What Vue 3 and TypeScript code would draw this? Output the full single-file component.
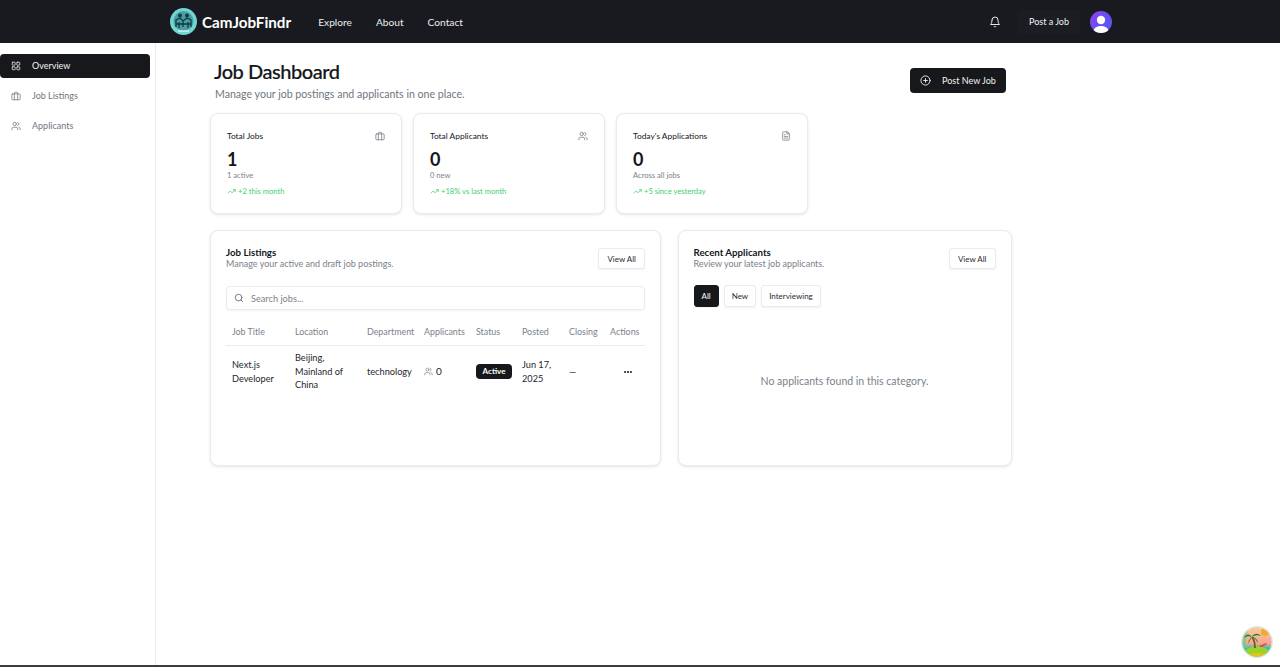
<template>
  <div class="app">
    <header class="navbar">
      <div class="brand">
        <svg class="logo" viewBox="0 0 27 27">
          <circle cx="13.5" cy="13.5" r="13.5" fill="#6fd6d2" />
          <circle cx="13.5" cy="13" r="10" fill="#4a9ea1" />
          <circle cx="10" cy="7.5" r="2" fill="#123c44" />
          <circle cx="17" cy="7.5" r="2" fill="#123c44" />
          <path d="M6 19v-7l4-2 3 3 4-3 4 2v7M13 13v6M9 14v6M18 14v6M6 16h15" fill="none" stroke="#0f3a42" stroke-width="1.3" />
          <path d="M8 23h11" stroke="#d8f4f2" stroke-width="1.4" />
        </svg>
        <span class="brand-name">CamJobFindr</span>
      </div>
      <nav class="nav-links">
        <a>Explore</a>
        <a>About</a>
        <a>Contact</a>
      </nav>
      <div class="nav-right">
        <svg class="bell" viewBox="0 0 24 24">
          <path d="M6 8a6 6 0 0 1 12 0c0 7 3 9 3 9H3s3-2 3-9" />
          <path d="M10.3 21a1.94 1.94 0 0 0 3.4 0" />
        </svg>
        <button class="post-job">Post a Job</button>
        <svg class="avatar" viewBox="0 0 22 22">
          <defs>
            <linearGradient id="av" x1="0" y1="0" x2="1" y2="1">
              <stop offset="0" stop-color="#8b3ff0" />
              <stop offset="1" stop-color="#4f5df0" />
            </linearGradient>
            <clipPath id="avc"><circle cx="11" cy="11" r="11" /></clipPath>
          </defs>
          <circle cx="11" cy="11" r="11" fill="url(#av)" />
          <g clip-path="url(#avc)" fill="#fff">
            <circle cx="11" cy="9" r="4.2" />
            <ellipse cx="11" cy="20" rx="7.5" ry="5" />
          </g>
        </svg>
      </div>
    </header>

    <div class="body">
      <aside class="sidebar">
        <a v-for="item in sideItems" :key="item.label" class="side-item" :class="{ active: item.active }">
          <svg class="icon" viewBox="0 0 24 24" v-html="icons[item.icon]"></svg>
          <span>{{ item.label }}</span>
        </a>
      </aside>

      <main class="main">
        <div class="page-head">
          <div>
            <h1>Job Dashboard</h1>
            <p>Manage your job postings and applicants in one place.</p>
          </div>
          <button class="post-new">
            <svg viewBox="0 0 24 24">
              <circle cx="12" cy="12" r="10" />
              <path d="M8 12h8M12 8v8" />
            </svg>
            Post New Job
          </button>
        </div>

        <section class="stats">
          <div v-for="s in stats" :key="s.title" class="stat">
            <div class="stat-top">
              <span>{{ s.title }}</span>
              <svg class="icon" viewBox="0 0 24 24" v-html="icons[s.icon]"></svg>
            </div>
            <div class="stat-value">{{ s.value }}</div>
            <div class="stat-sub">{{ s.sub }}</div>
            <div class="stat-trend">
              <svg viewBox="0 0 24 24">
                <path d="M22 7l-8.5 8.5-5-5L2 17" />
                <path d="M16 7h6v6" />
              </svg>
              {{ s.trend }}
            </div>
          </div>
        </section>

        <section class="panels">
          <div class="panel listings">
            <div class="panel-head">
              <div>
                <h2>Job Listings</h2>
                <p>Manage your active and draft job postings.</p>
              </div>
              <button class="outline">View All</button>
            </div>
            <div class="search">
              <svg viewBox="0 0 24 24">
                <circle cx="11" cy="11" r="8" />
                <path d="M21 21l-4.3-4.3" />
              </svg>
              <span>Search jobs...</span>
            </div>
            <table>
              <colgroup>
                <col v-for="c in columns" :key="c.name" :class="c.cls" />
              </colgroup>
              <thead>
                <tr>
                  <th v-for="c in columns" :key="c.name">{{ c.name }}</th>
                </tr>
              </thead>
              <tbody>
                <tr>
                  <td>Next.js Developer</td>
                  <td>Beijing, Mainland of China</td>
                  <td>technology</td>
                  <td>
                    <span class="count">
                      <svg class="icon" viewBox="0 0 24 24" v-html="icons.users"></svg>
                      0
                    </span>
                  </td>
                  <td><span class="badge">Active</span></td>
                  <td>Jun 17, 2025</td>
                  <td>—</td>
                  <td class="dots">
                    <svg viewBox="0 0 24 24">
                      <circle cx="5" cy="12" r="2.6" />
                      <circle cx="12" cy="12" r="2.6" />
                      <circle cx="19" cy="12" r="2.6" />
                    </svg>
                  </td>
                </tr>
              </tbody>
            </table>
          </div>

          <div class="panel recent">
            <div class="panel-head">
              <div>
                <h2>Recent Applicants</h2>
                <p>Review your latest job applicants.</p>
              </div>
              <button class="outline">View All</button>
            </div>
            <div class="filters">
              <button class="outline filter on">All</button>
              <button class="outline filter">New</button>
              <button class="outline filter">Interviewing</button>
            </div>
            <div class="empty">No applicants found in this category.</div>
          </div>
        </section>
      </main>
    </div>
    <div class="bottom-line"></div>

    <svg class="float-badge" viewBox="0 0 32 32">
      <defs>
        <linearGradient id="sky" x1="0" y1="0" x2="0" y2="1">
          <stop offset="0" stop-color="#f9cf9c" />
          <stop offset="0.55" stop-color="#f5a78c" />
          <stop offset="0.7" stop-color="#35bfae" />
        </linearGradient>
        <clipPath id="fb"><circle cx="16" cy="16" r="14.5" /></clipPath>
      </defs>
      <circle cx="16" cy="16" r="16" fill="#dfe6df" />
      <g clip-path="url(#fb)">
        <rect width="32" height="32" fill="url(#sky)" />
        <path d="M0 0h10C5 6 4 14 6 22H0z" fill="#66cf8e" opacity=".75" />
        <circle cx="24" cy="6" r="4" fill="#f6a92e" />
        <path d="M18 20l7-3 1 1-6 4z" fill="#e8455c" />
        <ellipse cx="16" cy="29" rx="14" ry="8.5" fill="#9ad42a" />
        <ellipse cx="16" cy="33" rx="15" ry="6" fill="#e2c51c" />
        <path d="M14 22c0-4-.5-8-3-11" stroke="#7a4f24" stroke-width="1.8" fill="none" />
        <path d="M11 11C8 7 5 8 3 12c3-2 5-2 8-1zM11 11c2-4 6-4 9-1-3-1-6-1-9 1zM11 11c-2 1-4 4-4 7 1-3 3-5 4-7zM11 11c3 0 6 3 6 6-2-3-3-5-6-6z" fill="#14803a" />
      </g>
    </svg>
  </div>
</template>

<script setup lang="ts">
const icons: Record<string, string> = {
  grid: '<rect x="3" y="3" width="7" height="7" rx="1"/><rect x="14" y="3" width="7" height="7" rx="1"/><rect x="14" y="14" width="7" height="7" rx="1"/><rect x="3" y="14" width="7" height="7" rx="1"/>',
  briefcase: '<rect x="2" y="7" width="20" height="14" rx="2"/><path d="M16 21V5a2 2 0 0 0-2-2h-4a2 2 0 0 0-2 2v16"/>',
  users: '<path d="M16 21v-2a4 4 0 0 0-4-4H6a4 4 0 0 0-4 4v2"/><circle cx="9" cy="7" r="4"/><path d="M22 21v-2a4 4 0 0 0-3-3.87"/><path d="M16 3.13a4 4 0 0 1 0 7.75"/>',
  file: '<path d="M15 2H6a2 2 0 0 0-2 2v16a2 2 0 0 0 2 2h12a2 2 0 0 0 2-2V7z"/><path d="M14 2v5h6"/><path d="M16 13H8M16 17H8M10 9H8"/>',
}

const sideItems = [
  { label: 'Overview', icon: 'grid', active: true },
  { label: 'Job Listings', icon: 'briefcase', active: false },
  { label: 'Applicants', icon: 'users', active: false },
]

const stats = [
  { title: 'Total Jobs', icon: 'briefcase', value: '1', sub: '1 active', trend: '+2 this month' },
  { title: 'Total Applicants', icon: 'users', value: '0', sub: '0 new', trend: '+18% vs last month' },
  { title: "Today's Applications", icon: 'file', value: '0', sub: 'Across all jobs', trend: '+5 since yesterday' },
]

const columns = [
  { name: 'Job Title', cls: 'c-title' },
  { name: 'Location', cls: 'c-loc' },
  { name: 'Department', cls: 'c-dep' },
  { name: 'Applicants', cls: 'c-app' },
  { name: 'Status', cls: 'c-status' },
  { name: 'Posted', cls: 'c-posted' },
  { name: 'Closing', cls: 'c-closing' },
  { name: 'Actions', cls: 'c-actions' },
]
</script>

<style>
html,
body {
  margin: 0;
  background: #fff;
}
</style>

<style scoped>
.app {
  height: 667px;
  display: flex;
  flex-direction: column;
  position: relative;
  overflow: hidden;
  font-family: Lato, "Open Sans", sans-serif;
  color: #14161a;
}

.navbar {
  height: 43px;
  flex: none;
  background: #181a20;
  display: flex;
  align-items: center;
  padding: 0 168px 0 170px;
  color: #fff;
}
.brand {
  display: flex;
  align-items: center;
  gap: 5px;
}
.logo {
  width: 27px;
  height: 27px;
}
.brand-name {
  font-size: 15.2px;
  font-weight: 700;
}
.nav-links {
  display: flex;
  margin-left: 27px;
  font-size: 10.2px;
  gap: 24px;
  color: #eceef0;
}
.nav-right {
  margin-left: auto;
  display: flex;
  align-items: center;
}
.bell {
  width: 12px;
  height: 12px;
  fill: none;
  stroke: #e8e8e8;
  stroke-width: 2;
  stroke-linecap: round;
  stroke-linejoin: round;
}
.post-job {
  margin-left: 17px;
  width: 62px;
  height: 24px;
  padding: 0;
  border: 0;
  border-radius: 4px;
  background: #1b1d23;
  color: #f2f2f2;
  font: inherit;
  font-size: 9px;
}
.avatar {
  margin-left: 10px;
  width: 22px;
  height: 22px;
}

.body {
  flex: 1;
  display: flex;
  min-height: 0;
}
.sidebar {
  width: 155px;
  flex: none;
  box-sizing: content-box;
  border-right: 1px solid #e9ebee;
  padding-top: 11px;
  display: flex;
  flex-direction: column;
  gap: 6px;
}
.side-item {
  width: 150px;
  height: 24px;
  box-sizing: border-box;
  padding: 0 0 1px 11px;
  display: flex;
  align-items: center;
  gap: 11px;
  font-size: 9px;
  color: #6f7680;
  border-radius: 4px;
}
.side-item.active {
  background: #17181b;
  color: #f5f5f5;
}
.icon {
  width: 10px;
  height: 10px;
  flex: none;
  fill: none;
  stroke: currentColor;
  stroke-width: 1.8;
  stroke-linecap: round;
  stroke-linejoin: round;
}

.main {
  flex: 1;
  padding: 12px 0 0 54px;
  max-width: 801px;
}
.page-head {
  display: flex;
  justify-content: space-between;
  align-items: flex-start;
  padding: 0 5px 0 4px;
  height: 58px;
}
.page-head h1 {
  margin: 0;
  font-size: 20px;
  line-height: 32px;
  font-weight: 500;
  letter-spacing: -0.45px;
  -webkit-text-stroke: 0.2px #14161a;
}
.page-head p {
  margin: 0 0 0 1px;
  font-size: 10.6px;
  line-height: 15px;
  color: #6f7680;
}
.post-new {
  width: 96px;
  height: 25px;
  margin-top: 13px;
  padding: 0 0 0 10px;
  border: 0;
  border-radius: 4px;
  background: #17181b;
  color: #f2f2f2;
  font: inherit;
  font-size: 9px;
  display: flex;
  align-items: center;
  gap: 11px;
}
.post-new svg {
  width: 11px;
  height: 11px;
  fill: none;
  stroke: currentColor;
  stroke-width: 2;
  stroke-linecap: round;
}

.stats {
  display: grid;
  grid-template-columns: repeat(4, 192px);
  gap: 11px;
}
.stat {
  height: 101px;
  box-sizing: border-box;
  padding: 16px 16px 0;
  border: 1px solid #e9ebee;
  border-radius: 8px;
  box-shadow: 0 1px 3px rgba(0, 0, 0, 0.1);
  background: #fff;
}
.stat-top {
  display: flex;
  justify-content: space-between;
  align-items: center;
  font-size: 8.4px;
  line-height: 12px;
}
.stat-top .icon {
  color: #6f7680;
}
.stat-value {
  margin-top: 7px;
  font-size: 18px;
  line-height: 20px;
  font-weight: 700;
}
.stat-sub {
  font-size: 7.6px;
  line-height: 12px;
  color: #7b818a;
}
.stat-trend {
  margin-top: 4px;
  display: flex;
  align-items: center;
  gap: 2px;
  font-size: 7.6px;
  line-height: 12px;
  color: #3ecf70;
}
.stat-trend svg {
  width: 9px;
  height: 9px;
  fill: none;
  stroke: currentColor;
  stroke-width: 2;
}

.panels {
  margin-top: 16px;
  display: grid;
  grid-template-columns: 451px 334px;
  gap: 16.5px;
}
.panel {
  height: 236px;
  box-sizing: border-box;
  padding: 15px;
  border: 1px solid #e9ebee;
  border-radius: 8px;
  box-shadow: 0 1px 3px rgba(0, 0, 0, 0.1);
  background: #fff;
  display: flex;
  flex-direction: column;
}
.panel-head {
  display: flex;
  justify-content: space-between;
  align-items: center;
  height: 24px;
}
.panel-head h2 {
  margin: 0;
  font-size: 9.7px;
  line-height: 12px;
  font-weight: 700;
}
.panel-head p {
  margin: 0;
  font-size: 9px;
  line-height: 12px;
  color: #7b818a;
}
.panel-head .outline {
  height: 21px;
  margin-top: 1px;
  padding: 0 8px;
}
.outline {
  padding: 0 7px;
  border: 1px solid #e9ebee;
  border-radius: 3px;
  background: #fff;
  box-shadow: 0 1px 2px rgba(0, 0, 0, 0.06);
  color: #2a2d33;
  font: inherit;
  font-size: 8px;
}
.search {
  margin-top: 16px;
  height: 24px;
  box-sizing: border-box;
  border: 1px solid #e9ebee;
  border-radius: 4px;
  box-shadow: 0 1px 2px rgba(0, 0, 0, 0.05);
  padding-left: 7px;
  display: flex;
  align-items: center;
  gap: 7px;
  font-size: 9.2px;
  color: #7b818a;
}
.search svg {
  width: 10px;
  height: 10px;
  fill: none;
  stroke: #5f6670;
  stroke-width: 2;
  stroke-linecap: round;
}

table {
  margin-top: 8px;
  width: 419px;
  table-layout: fixed;
  border-collapse: collapse;
  font-size: 9.2px;
}
.c-title { width: 63px; }
.c-loc { width: 72px; }
.c-dep { width: 57px; }
.c-app { width: 52px; }
.c-status { width: 46px; }
.c-posted { width: 47px; }
.c-closing { width: 41px; }
.c-actions { width: 41px; }
th {
  height: 27px;
  padding: 0 6px;
  font-weight: 400;
  text-align: left;
  color: #7b818a;
  font-size: 8.9px;
  white-space: nowrap;
  border-bottom: 1px solid #e9ebee;
}
td {
  height: 51px;
  padding: 0 6px;
  line-height: 13.5px;
  color: #24272c;
}
.count {
  display: flex;
  align-items: center;
  gap: 3px;
  font-size: 10px;
}
.count .icon {
  width: 9px;
  height: 9px;
  color: #7b818a;
}
.badge {
  display: block;
  width: 36px;
  height: 15px;
  border-radius: 4px;
  background: #17181b;
  color: #fff;
  font-size: 8px;
  font-weight: 700;
  line-height: 15px;
  text-align: center;
}
.dots svg {
  display: block;
  margin-left: 13px;
  width: 10px;
  height: 10px;
  fill: #24272c;
}

.filters {
  margin-top: 15px;
  display: flex;
  gap: 5px;
}
.filter {
  height: 22px;
}
.filter.on {
  background: #17181b;
  border-color: #17181b;
  color: #fff;
}
.empty {
  flex: 1;
  display: flex;
  align-items: center;
  justify-content: center;
  padding-top: 5px;
  font-size: 10.5px;
  color: #7b818a;
}

.bottom-line {
  height: 2px;
  flex: none;
  background: #3a3c40;
}
.float-badge {
  position: absolute;
  left: 1241px;
  top: 626px;
  width: 32px;
  height: 32px;
}
</style>
